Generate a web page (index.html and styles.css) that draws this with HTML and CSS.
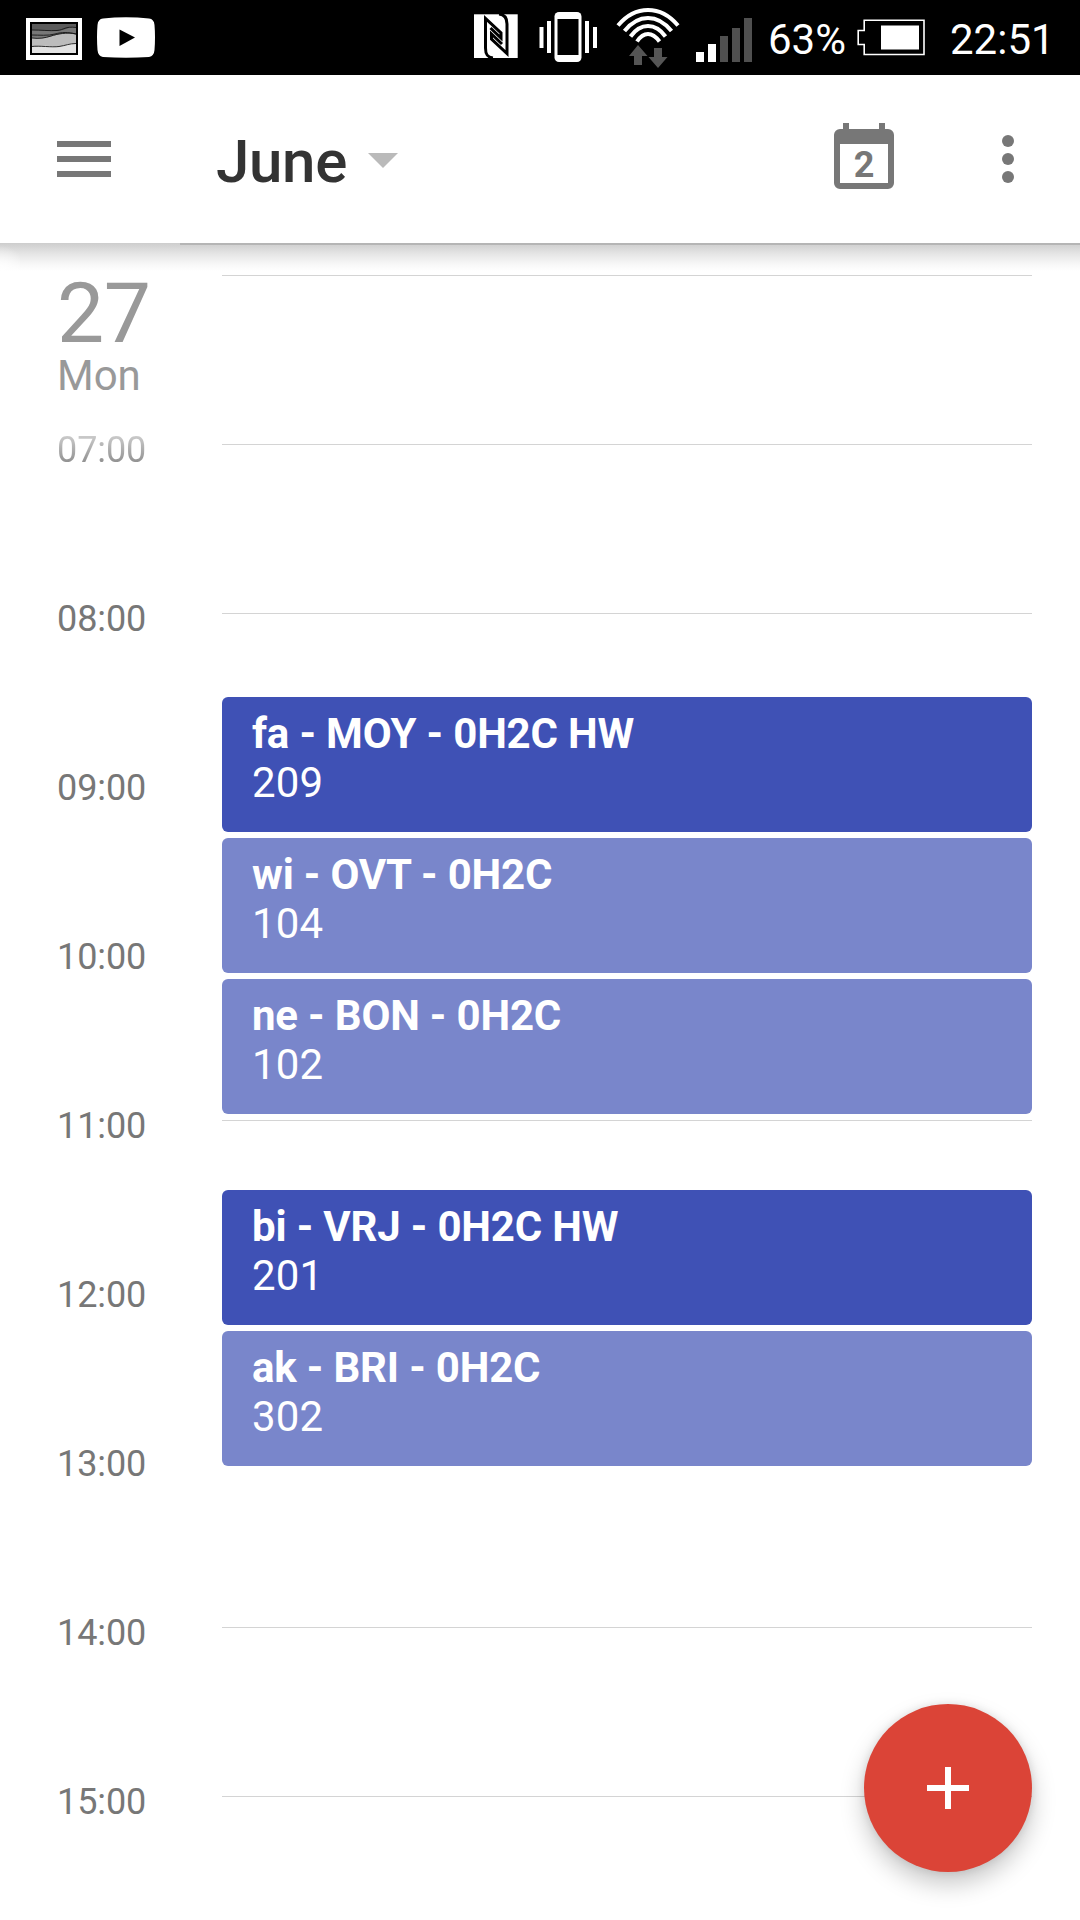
FILE: index.html
```html
<!DOCTYPE html>
<html lang="en">
<head>
<meta charset="utf-8">
<title>Calendar</title>
<link rel="stylesheet" href="styles.css">
</head>
<body>
<header class="status">
  <svg class="status-icon" width="155" height="75" viewBox="0 0 155 75">
    <rect x="26" y="18" width="56" height="42" fill="#fff"/>
    <rect x="30" y="22" width="48" height="33" fill="#000"/>
    <rect x="32" y="24" width="44" height="29" fill="#e2e2e2"/>
    <path d="M32 24h44v19c-9 0-13 4-20 3.500-8-1-16-1-24 .5z" fill="#bcbcbc"/>
    <path d="M32 24h44v10c-10-3-19 1-27 3-7 2-12 1-17 1z" fill="#777"/>
    <path d="M32 24h44v3.500c-10-1-9 4-22 3.500-8-1-16-1-22-1z" fill="#5b5b5b"/>
    <path d="M32 30c8 0 18 1 25 .5S65 26 76 27.500M32 35c7 0 16 1 23-1s13-2 21 0M32 38c7 1 13 0 19-2s16-4 25-2M32 46.500c7-1 20 1 27 0s10-3 17-3" fill="none" stroke="#161616" stroke-width=".9"/>
    <path d="M103 18.500Q126 16 149 18.500Q154 19 154.500 25Q155.500 37 154.500 50Q154 56 149 57Q126 58.500 103 57Q98 56 97.500 50Q96.500 37 97.500 25Q98 19 103 18.500Z" fill="#fff"/>
    <path d="M119.500 29.500V46L135 37.500Z" fill="#000"/>
  </svg>
  <div class="status-right">
    <svg class="status-icon" width="310" height="75" viewBox="460 0 310 75">
      <rect x="474" y="14.300" width="43.700" height="43.700" fill="#fff"/>
      <g fill="none" stroke="#000" stroke-width="3">
        <path d="M493 58C487 57.500 485.500 54 485.500 48V18.500L501 33V38L490.500 28"/>
        <path d="M499 14C505 14.500 507 18 507 24V53.500L491.500 39V34L502 44"/>
      </g>
      <rect x="554.500" y="12" width="27" height="50" rx="4.500" fill="#fff"/>
      <rect x="557.500" y="19" width="21" height="36" fill="#000"/>
      <path d="M539.500 27h4v21h-4zM547 21h4v32h-4zM585 21h4v32h-4zM593 27h4v21h-4z" fill="#fff"/>
      <g fill="none" stroke="#fff" stroke-width="4">
        <path d="M618 25.500Q631 10 648 10T678 25.500M624.500 31Q635 18 648 18T671.500 31M630.500 36.500Q638 26 648 26T665.500 36.500M637 41.500Q642 34 648 34T659.500 41.500"/>
      </g>
      <path d="M638 45l9.500 11h-5.500v9h-8v-9h-5zM654 48h8v9h5.500l-9.500 11-9.500-11h5.500z" fill="#555"/>
      <path d="M696 52h8v10h-8zM708 44h8v18h-8z" fill="#fff"/>
      <path d="M720 36h8v26h-8zM732 28h8v34h-8zM744 18h8v44h-8z" fill="#505050"/>
    </svg>
    <span class="status-text pct">63%</span>
    <svg class="status-icon" width="68" height="75" viewBox="857 0 68 75">
      <path d="M864.200 20.200H924V54.500H864.200V44.500H858.200V30.500H864.200Z" fill="none" stroke="#fff" stroke-width="1.600"/>
      <rect x="881" y="25.500" width="38" height="24" fill="#fff"/>
    </svg>
    <span class="status-text clock">22:51</span>
  </div>
</header>

<nav class="toolbar">
  <div class="menu"><i></i><i></i><i></i></div>
  <h1 class="month">June</h1>
  <svg class="caret" width="30" height="15" viewBox="0 0 30 15"><path d="M0 0h30L15 15z"/></svg>
  <div class="today"><span>2</span></div>
  <div class="more"><i></i><i></i><i></i></div>
</nav>

<main class="day">
  <div class="toolbar-shadow"></div>
  <div class="date"><div class="num">27</div><div class="dow">Mon</div></div>
  <div class="hours">
    <div class="hour"></div>
    <div class="hour"><span class="fading">07:00</span></div>
    <div class="hour"><span>08:00</span></div>
    <div class="hour"><span>09:00</span></div>
    <div class="hour"><span>10:00</span></div>
    <div class="hour"><span>11:00</span></div>
    <div class="hour"><span>12:00</span></div>
    <div class="hour"><span>13:00</span></div>
    <div class="hour"><span>14:00</span></div>
    <div class="hour"><span>15:00</span></div>
  </div>
  <div class="events">
    <article class="event strong"><b>fa - MOY - 0H2C HW</b><p>209</p></article>
    <article class="event"><b>wi - OVT - 0H2C</b><p>104</p></article>
    <article class="event"><b>ne - BON - 0H2C</b><p>102</p></article>
    <article class="event strong later"><b>bi - VRJ - 0H2C HW</b><p>201</p></article>
    <article class="event"><b>ak - BRI - 0H2C</b><p>302</p></article>
  </div>
</main>

<div class="fab"><svg width="42" height="42" viewBox="0 0 42 42"><path d="M18 0h6v18h18v6H24v18h-6V24H0v-6h18z" fill="#fff"/></svg></div>
</body>
</html>
```
FILE: styles.css
```css
* { box-sizing: border-box; margin: 0; padding: 0; }
body {
  width: 1080px;
  height: 1920px;
  overflow: hidden;
  position: relative;
  background: #fff;
  font-family: Roboto, sans-serif;
}
.status {
  height: 75px;
  background: #000;
  display: flex;
  justify-content: space-between;
  padding-right: 28px;
}
.status-icon { display: block; flex: none; }
.status-right { display: flex; }
.status-text { color: #fff; font-size: 42px; line-height: 80px; white-space: nowrap; }
.pct { width: 89px; margin-left: -2px; }
.clock { width: 102px; margin-left: 25px; }

.toolbar {
  height: 168px;
  background: #fff;
  display: flex;
  align-items: flex-start;
}
.menu {
  width: 54px;
  margin: 66px 0 0 57px;
  display: flex;
  flex-direction: column;
  gap: 9px;
}
.menu i { height: 6px; background: #777; }
.month {
  width: 152px;
  margin: 52px 0 0 105px;
  font-size: 60px;
  line-height: 70px;
  font-weight: 500;
  letter-spacing: -.3px;
  color: #333;
}
.caret { margin: 78px 0 0; fill: #bababa; }
.today {
  position: relative;
  width: 60px;
  height: 60px;
  margin: 54px 0 0 436px;
  border: 6px solid #777;
  border-top-width: 15px;
  border-radius: 6px;
  color: #777;
  text-align: center;
  font-size: 36px;
  line-height: 42px;
  font-weight: 700;
}
.today::before, .today::after {
  content: "";
  position: absolute;
  top: -21px;
  width: 6px;
  height: 7px;
  background: #777;
}
.today::before { left: 3px; }
.today::after { right: 3px; }
.more {
  width: 12px;
  margin: 60px 0 0 108px;
  display: flex;
  flex-direction: column;
  gap: 6px;
}
.more i { height: 12px; border-radius: 50%; background: #777; }

.day {
  position: relative;
  height: 1677px;
  display: grid;
  grid-template-columns: 222px 810px 48px;
}
.toolbar-shadow {
  position: absolute;
  inset: 0 0 auto 0;
  height: 28px;
  background:
    linear-gradient(#b5b5b5, #b5b5b5) 180px 0 / 900px 2px no-repeat,
    radial-gradient(circle at 0 100%, #fff 0, transparent 26px) 0 0 / 20px 28px no-repeat,
    linear-gradient(#cdcdcd, #e6e6e6 40%, #f7f7f7 75%, #fff);
}
.date {
  grid-area: 1 / 1;
  padding: 33px 0 0 57px;
  color: #999;
}
.num { font-size: 84px; line-height: 76px; letter-spacing: -.5px; }
.dow { font-size: 42px; line-height: 48px; }
.hours {
  grid-area: 1 / 1 / 2 / 3;
  padding-top: 32px;
}
.hour {
  height: 169px;
  display: flex;
  justify-content: space-between;
}
.hour::after {
  content: "";
  width: 810px;
  height: 1px;
  margin-left: auto;
  background: #d4d4d4;
}
.hour span {
  margin: -15px 0 0 57px;
  height: 42px;
  font-size: 36px;
  line-height: 42px;
  letter-spacing: -.1px;
  color: #777;
}
.hour .fading {
  color: transparent;
  background: linear-gradient(#d0d0d0 10%, #888 90%);
  background-clip: text;
  -webkit-background-clip: text;
}
.events {
  grid-area: 1 / 2;
  padding-top: 454px;
  position: relative;
  display: flex;
  flex-direction: column;
  gap: 6px;
}
.event {
  height: 135px;
  border-radius: 6px;
  background: #7986cb;
  color: #fff;
  padding: 12px 30px;
  font-size: 42px;
  line-height: 49px;
}
.event b { display: block; font-weight: 700; letter-spacing: -.18px; }
.event p { letter-spacing: .2px; }
.strong { background: #3f51b5; }
.later { margin-top: 70px; }

.fab {
  position: absolute;
  left: 864px;
  top: 1704px;
  width: 168px;
  height: 168px;
  border-radius: 50%;
  background: #db4437;
  box-shadow: 0 12px 24px rgba(0,0,0,.22), 0 0 8px rgba(0,0,0,.1);
  display: grid;
  place-items: center;
}
```
